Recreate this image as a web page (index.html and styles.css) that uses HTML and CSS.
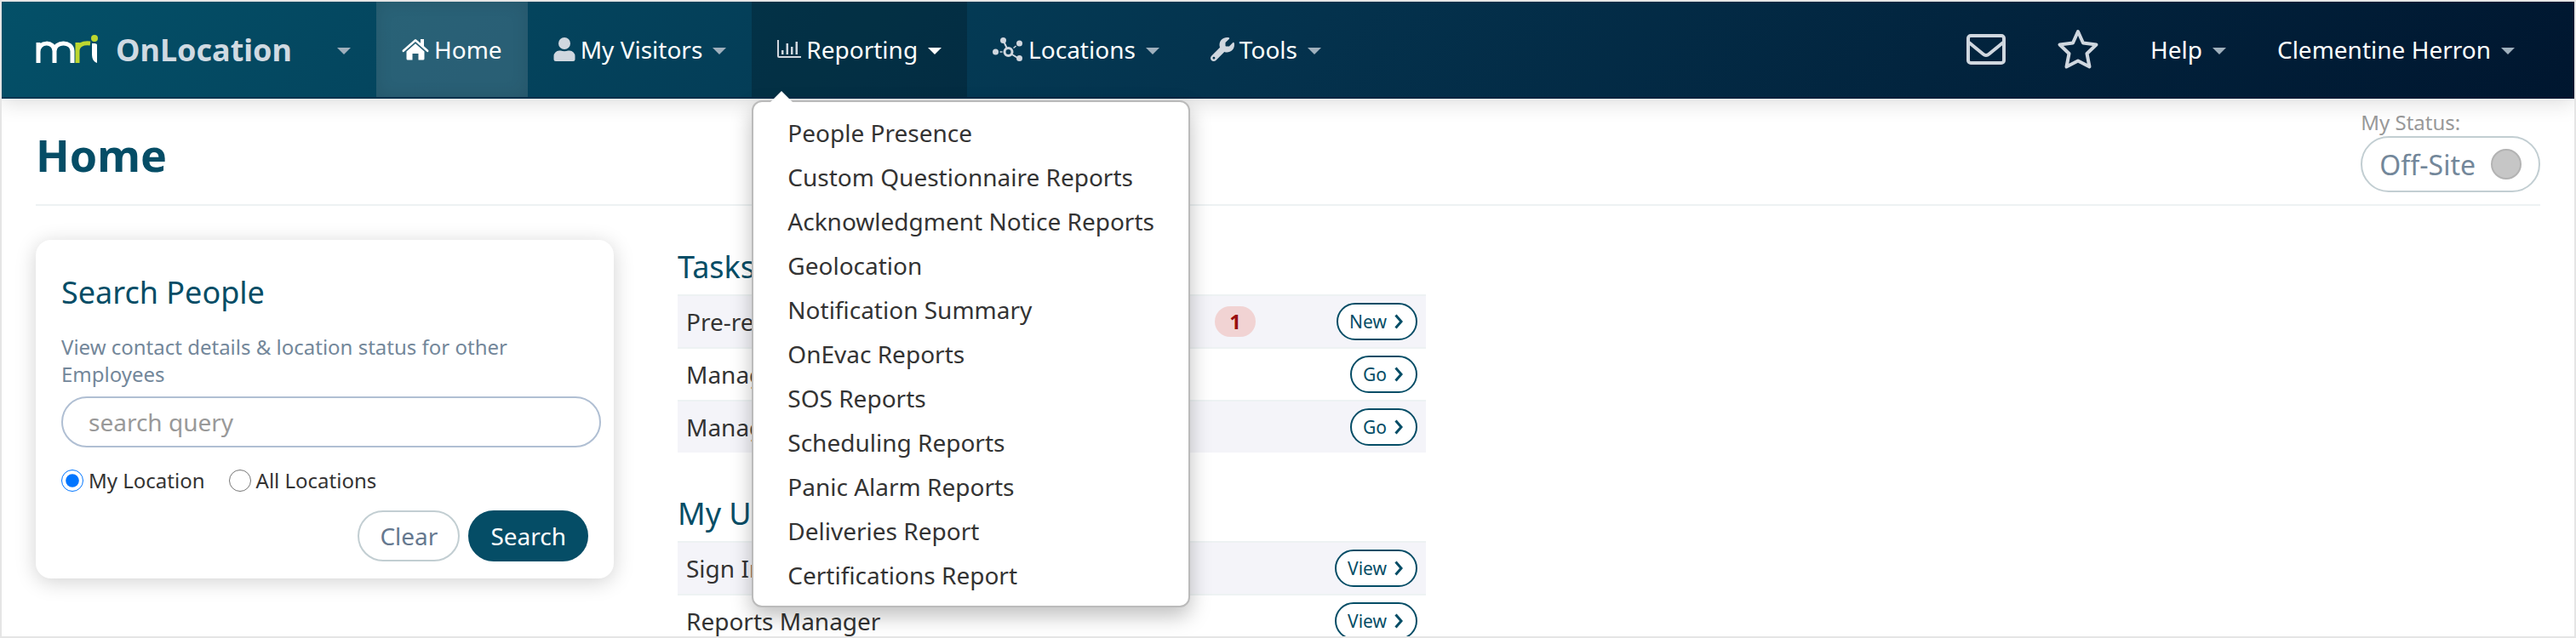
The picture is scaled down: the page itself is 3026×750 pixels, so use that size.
FILE: index.html
```
<!DOCTYPE html>
<html lang="en">
<head>
  <meta charset="utf-8">
  <title>Home - OnLocation</title>
  <link rel="stylesheet" href="styles.css">
</head>
<body>
  <header class="navbar">
    <button type="button" class="brand">
      <svg class="logo" width="74" height="34" viewBox="0 0 74 34" role="img" aria-label="mri">
        <g fill="none" stroke-width="5">
          <path stroke="#fff" d="M3 33V9M3 20C3 7 22 7 22 19V33M22 19C22 7 43 7 43 19V33"/>
          <path stroke="#bdd62f" d="M49 33V9M49 19C49 12 55 9 64 10"/>
        </g>
        <path fill="#fff" d="M66 10C69 10 72 10 72 12V33C67 31 66 27 66 22z"/>
        <circle cx="69" cy="4" r="4" fill="#bdd62f"/>
      </svg>
      <span class="brand-name">OnLocation</span>
      <span class="caret"></span>
    </button>

    <nav class="menu">
      <a href="#" class="menu-item active">
        <svg width="32" height="26" viewBox="0 0 32 26" fill="currentColor">
          <path d="M15 1.500a1.500 1.500 0 0 1 2 0l5 4.300V1h4v8.300l5 4.500a1.300 1.300 0 0 1-1.700 2L16 4 2.700 15.800a1.300 1.300 0 0 1-1.700-2z"/>
          <path d="M16 6.200 26.500 15.500V24a1.500 1.500 0 0 1-1.500 1.500h-5.500V18h-7v7.500H7A1.500 1.500 0 0 1 5.500 24v-8.500z"/>
        </svg>
        Home
      </a>
      <a href="#" class="menu-item">
        <svg class="dim" width="26" height="28" viewBox="0 0 26 28" fill="currentColor">
          <circle cx="13" cy="7" r="7"/>
          <path d="M7 15.500h1.500q4.500 1.500 9 0H19a6.500 6.500 0 0 1 6.500 6.500v3.500a2.500 2.500 0 0 1-2.500 2.500H3A2.500 2.500 0 0 1 .5 25.500V22A6.500 6.500 0 0 1 7 15.500z"/>
        </svg>
        My Visitors
        <span class="caret"></span>
      </a>
      <div class="dropdown">
        <a href="#" class="menu-item open">
          <svg class="dim" width="28" height="22" viewBox="0 0 28 22" fill="currentColor">
            <path d="M0 0h2v19h26v2H2q-2 0-2-2zM5 12h2.500v5H5zM10.500 4H13v13h-2.500zM16 8h2.500v9H16zM21.500 2H24v15h-2.500z"/>
          </svg>
          Reporting
          <span class="caret"></span>
        </a>
        <ul class="dropdown-menu">
          <li><a href="#">People Presence</a></li>
          <li><a href="#">Custom Questionnaire Reports</a></li>
          <li><a href="#">Acknowledgment Notice Reports</a></li>
          <li><a href="#">Geolocation</a></li>
          <li><a href="#">Notification Summary</a></li>
          <li><a href="#">OnEvac Reports</a></li>
          <li><a href="#">SOS Reports</a></li>
          <li><a href="#">Scheduling Reports</a></li>
          <li><a href="#">Panic Alarm Reports</a></li>
          <li><a href="#">Deliveries Report</a></li>
          <li><a href="#">Certifications Report</a></li>
        </ul>
      </div>
      <a href="#" class="menu-item">
        <svg class="dim" width="36" height="28" viewBox="0 0 36 28" fill="currentColor" stroke="currentColor">
          <g stroke="none">
            <circle cx="3.500" cy="17" r="3.500"/>
            <circle cx="12.500" cy="3.500" r="3.500"/>
            <circle cx="31.500" cy="7" r="3.500"/>
            <circle cx="31.500" cy="24.500" r="3.500"/>
          </g>
          <circle cx="18.500" cy="17" r="4.500" fill="none" stroke-width="3"/>
          <path fill="none" stroke-width="2" d="M12.500 3.500 16.500 12M22 19.500 31 25"/>
          <path fill="none" stroke-width="1.500" d="M8.500 17h3M24.500 12.500l3-2.500"/>
        </svg>
        Locations
        <span class="caret"></span>
      </a>
      <a href="#" class="menu-item">
        <svg class="dim" width="28" height="28" viewBox="0 0 512 512" fill="currentColor">
          <path fill-rule="evenodd" d="M352 320c88.400 0 160-71.600 160-160c0-15.300-2.200-30.100-6.200-44.200c-3.100-10.800-16.400-13.200-24.300-5.300l-76.800 76.800c-3 3-7.100 4.700-11.300 4.700H336c-8.800 0-16-7.200-16-16V118.600c0-4.200 1.700-8.300 4.700-11.300l76.800-76.800c7.900-7.900 5.400-21.200-5.300-24.300C382.100 2.200 367.300 0 352 0C263.600 0 192 71.600 192 160c0 19.100 3.400 37.500 9.500 54.500L19.900 396.100C7.200 408.800 0 426.100 0 444.100C0 481.600 30.400 512 67.900 512c18 0 35.300-7.200 48-19.900L297.500 310.500c17 6.200 35.400 9.500 54.500 9.500zM72 416a26 26 0 1 1 0 52 26 26 0 1 1 0-52z"/>
        </svg>
        Tools
        <span class="caret"></span>
      </a>
    </nav>

    <nav class="menu menu-right">
      <a href="#" class="menu-item" aria-label="Messages">
        <svg class="dim" width="46" height="36" viewBox="0 0 46 36" fill="none" stroke="currentColor" stroke-width="4">
          <rect x="2" y="2" width="42" height="32" rx="3"/>
          <path d="M3 10 19.500 23.500q3.500 3 7 0L43 10"/>
        </svg>
      </a>
      <a href="#" class="menu-item" aria-label="Favourites">
        <svg class="dim" width="50" height="48" viewBox="0 0 50 48" fill="none" stroke="currentColor" stroke-width="4" stroke-linejoin="round">
          <path d="M25 3 31 16.500 46.500 18.500 35.500 29 38.500 44.500 25 37.500 11.500 44.500 14.500 29 3.500 18.500 19 16.500z"/>
        </svg>
      </a>
      <a href="#" class="menu-item">Help <span class="caret"></span></a>
      <a href="#" class="menu-item">Clementine Herron <span class="caret"></span></a>
    </nav>
  </header>

  <main class="page">
    <div class="page-header">
      <h1>Home</h1>
      <div class="status">
        <span class="status-label" id="status-label">My Status:</span>
        <button type="button" class="status-button" aria-describedby="status-label">Off-Site <span class="status-dot"></span></button>
      </div>
    </div>

    <div class="columns">
      <form class="search-card">
        <h2>Search People</h2>
        <label class="hint" for="query">View contact details &amp; location status for other Employees</label>
        <input type="text" class="query" id="query" placeholder="search query">
        <div class="radios">
          <label><input type="radio" name="scope" checked> My Location</label>
          <label><input type="radio" name="scope"> All Locations</label>
        </div>
        <div class="actions">
          <button type="reset" class="btn">Clear</button>
          <button type="submit" class="btn btn-primary">Search</button>
        </div>
      </form>

      <div class="lists">
        <section>
          <h2>Tasks</h2>
          <table class="list">
            <tr>
              <td>Pre-reg</td>
              <td class="count"><span class="badge">1</span></td>
              <td class="action"><button type="button" class="btn-small">New <svg width="10" height="18" viewBox="0 0 10 18"><path d="M1.500 1.500 8 9l-6.500 7.500"/></svg></button></td>
            </tr>
            <tr>
              <td>Manage</td>
              <td class="count"></td>
              <td class="action"><button type="button" class="btn-small">Go <svg width="10" height="18" viewBox="0 0 10 18"><path d="M1.500 1.500 8 9l-6.500 7.500"/></svg></button></td>
            </tr>
            <tr>
              <td>Manage</td>
              <td class="count"></td>
              <td class="action"><button type="button" class="btn-small">Go <svg width="10" height="18" viewBox="0 0 10 18"><path d="M1.500 1.500 8 9l-6.500 7.500"/></svg></button></td>
            </tr>
          </table>
        </section>

        <section>
          <h2>My Users</h2>
          <table class="list">
            <tr>
              <td>Sign In</td>
              <td class="count"></td>
              <td class="action"><button type="button" class="btn-small">View <svg width="10" height="18" viewBox="0 0 10 18"><path d="M1.500 1.500 8 9l-6.500 7.500"/></svg></button></td>
            </tr>
            <tr>
              <td>Reports Manager</td>
              <td class="count"></td>
              <td class="action"><button type="button" class="btn-small">View <svg width="10" height="18" viewBox="0 0 10 18"><path d="M1.500 1.500 8 9l-6.500 7.500"/></svg></button></td>
            </tr>
          </table>
        </section>
      </div>
    </div>
  </main>
</body>
</html>
```

FILE: styles.css
```
* {
  box-sizing: border-box;
}

body {
  margin: 0;
  height: 100vh;
  overflow: hidden;
  border: 2px solid #e5e5e5;
  background: #fff;
  color: #333;
  font-family: "Noto Sans", sans-serif;
  font-size: 28px;
}

a {
  color: inherit;
  text-decoration: none;
}

button, input {
  font-family: inherit;
}

h1, h2 {
  margin: 0;
  color: #054d66;
}

h2 {
  font-size: 36px;
  font-weight: 400;
  line-height: 48px;
}

/* top bar */
.navbar {
  position: relative;
  display: flex;
  height: 114px;
  padding-right: 40px;
  border-bottom: 2px solid rgba(0, 20, 50, 0.4);
  background: linear-gradient(135deg, #045068, #04324d 50%, #00162f) border-box;
  box-shadow: 0 4px 24px rgba(0, 0, 0, 0.15);
  color: #fff;
  z-index: 1;
}

.brand {
  display: flex;
  align-items: center;
  width: 440px;
  padding: 0 30px 0 40px;
  border: 0;
  background: none;
  color: #d0dae2;
}

.brand-name {
  margin-left: 20px;
  font-size: 36px;
  font-weight: 700;
}

.brand .caret {
  margin-left: auto;
}

.menu {
  display: flex;
}

.menu-right {
  margin-left: auto;
}

.menu-item {
  display: flex;
  align-items: center;
  gap: 6px;
  height: 112px;
  padding: 0 30px;
  white-space: nowrap;
}

.menu-item.active {
  background: rgba(255, 255, 255, 0.15);
  box-shadow: inset 0 0 20px rgba(0, 0, 0, 0.1);
}

.menu-item.open {
  background: rgba(0, 0, 0, 0.2);
}

.dim {
  color: #d0d7df;
}

.caret {
  margin: 4px 0 0 6px;
  border: 8px solid transparent;
  border-top-color: #9fb0bd;
  border-bottom: 0;
}

.open .caret {
  border-top-color: #fff;
}

.dropdown {
  position: relative;
}

.dropdown-menu {
  position: absolute;
  top: 116px;
  left: 0;
  margin: 0;
  padding: 10px 0;
  list-style: none;
  border: 2px solid #bbb;
  border-radius: 12px;
  background: #fff;
  box-shadow: 0 10px 24px rgba(0, 0, 0, 0.25);
  color: #333;
}

.dropdown-menu::before {
  content: "";
  position: absolute;
  top: -13px;
  left: 20px;
  border: 13px solid transparent;
  border-top: 0;
  border-bottom-color: #fff;
}

.dropdown-menu a {
  display: block;
  padding: 0 40px;
  line-height: 52px;
  white-space: nowrap;
}

/* page heading */
.page {
  padding: 0 40px;
}

.page-header {
  display: flex;
  justify-content: space-between;
  height: 126px;
  border-bottom: 2px solid #edf2f3;
}

h1 {
  font-size: 52px;
  line-height: 132px;
}

.status {
  display: flex;
  flex-direction: column;
  padding-top: 12px;
}

.status-label {
  color: #999;
  font-size: 24px;
  line-height: 32px;
}

.status-button {
  display: flex;
  align-items: center;
  gap: 18px;
  height: 66px;
  padding: 0 20px;
  border: 2px solid #c2ced2;
  border-radius: 33px;
  background: #fff;
  color: #73879a;
  font-size: 32px;
}

.status-dot {
  width: 36px;
  height: 36px;
  border: 2px solid #b3b3b3;
  border-radius: 50%;
  background: #c6c6c6;
}

.columns {
  display: grid;
  grid-template-columns: minmax(0, 679px) minmax(0, 879px);
  align-items: start;
  gap: 75px;
  padding-top: 40px;
}

/* search people */
.search-card {
  padding: 38px 15px 20px 30px;
  border-radius: 18px;
  background: #fff;
  box-shadow: 0 4px 24px rgba(0, 0, 0, 0.18);
}

.hint {
  display: block;
  margin: 24px 0 10px;
  color: #73879a;
  font-size: 24px;
  line-height: 32px;
}

.query {
  display: block;
  width: 100%;
  height: 60px;
  padding: 0 30px;
  border: 2px solid #b0bfd3;
  border-radius: 30px;
  font-size: 28px;
}

.query::placeholder {
  color: #999;
}

.radios {
  display: flex;
  gap: 28px;
  margin: 20px 0 16px;
  font-size: 24px;
  line-height: 38px;
}

.radios label {
  display: flex;
  align-items: center;
  gap: 6px;
}

.radios input {
  width: 26px;
  height: 26px;
  margin: 0;
}

.actions {
  display: flex;
  justify-content: flex-end;
  gap: 10px;
  padding-right: 15px;
}

.btn {
  height: 60px;
  padding: 0 24px;
  border: 2px solid #c2ced2;
  border-radius: 30px;
  background: #fff;
  color: #65788f;
  font-size: 28px;
}

.btn-primary {
  border-color: #054d66;
  background: #054d66;
  color: #fff;
}

/* tasks and links */
.lists {
  display: flex;
  flex-direction: column;
  gap: 48px;
  padding-top: 8px;
}

.list {
  width: 100%;
  margin-top: 8px;
  border-spacing: 0;
}

.list td {
  height: 62px;
  padding: 0 10px;
  border-top: 2px solid #edf2f3;
}

.list tr:nth-child(odd) td {
  background: #f4f4f9;
}

.list .count {
  width: 100px;
  text-align: center;
}

.list .action {
  width: 174px;
  text-align: right;
}

.badge {
  display: block;
  width: 48px;
  margin: 0 auto;
  border-radius: 18px;
  background: #f1d3d3;
  color: #990f0f;
  font-size: 24px;
  font-weight: 700;
  line-height: 36px;
}

.btn-small {
  display: inline-flex;
  align-items: center;
  gap: 9px;
  height: 44px;
  padding: 0 15px 0 13px;
  border: 2px solid #054d66;
  border-radius: 22px;
  background: #fff;
  color: #054d66;
  font-size: 21px;
  vertical-align: middle;
}

.btn-small path {
  fill: none;
  stroke: #054d66;
  stroke-width: 3;
}
```
